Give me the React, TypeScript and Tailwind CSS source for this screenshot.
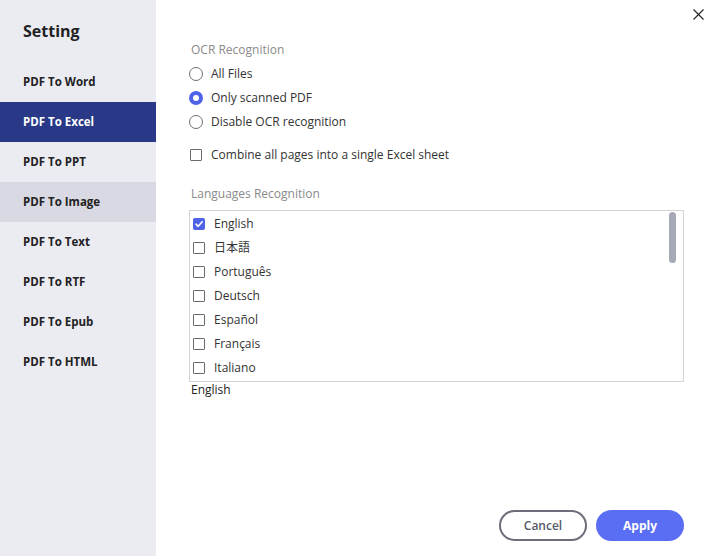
import React from "react";

const items = [
  "PDF To Word",
  "PDF To Excel",
  "PDF To PPT",
  "PDF To Image",
  "PDF To Text",
  "PDF To RTF",
  "PDF To Epub",
  "PDF To HTML",
];

const langs = ["English", "日本語", "Português", "Deutsch", "Español", "Français", "Italiano"];

function Radio({ checked, label }: { checked?: boolean; label: string }) {
  return (
    <div className="flex items-center h-6">
      <span
        className={
          checked
            ? "w-[14px] h-[14px] rounded-full bg-[#4f63e8] flex items-center justify-center"
            : "w-[14px] h-[14px] rounded-full border border-[#707070] bg-white"
        }
      >
        {checked && <span className="w-[6px] h-[6px] rounded-full bg-white" />}
      </span>
      <span className="ml-[8px] text-[12px] text-[#333]">{label}</span>
    </div>
  );
}

function Check({ checked, label }: { checked?: boolean; label: string }) {
  return (
    <div className="flex items-center h-6">
      {checked ? (
        <span className="w-[12px] h-[12px] rounded-[2px] bg-[#4f63e8] flex items-center justify-center">
          <svg width="10" height="10" viewBox="0 0 10 10">
            <path d="M2 5.2 L4.2 7.3 L8.2 2.8" stroke="white" strokeWidth="1.6" fill="none" strokeLinecap="round" strokeLinejoin="round" />
          </svg>
        </span>
      ) : (
        <span className="w-[12px] h-[12px] rounded-[1px] border border-[#6a6a6a] bg-white" />
      )}
      <span className="ml-[9px] text-[12px] text-[#333]">{label}</span>
    </div>
  );
}

export default function App() {
  return (
    <div
      className="w-[714px] h-[556px] flex bg-white overflow-hidden"
      style={{ fontFamily: '"Open Sans", "Noto Sans", "Noto Sans CJK JP", sans-serif' }}
    >
      <aside className="w-[156px] bg-[#ebecf2] flex flex-col">
        <div className="h-[62px] pl-[23px] pt-[19px] text-[16px] font-bold text-[#222]">Setting</div>
        {items.map((it) => (
          <div
            key={it}
            className={
              it === "PDF To Excel"
                ? "h-[40px] flex items-center pl-[23px] text-[11.5px] font-bold bg-[#293887] text-white"
                : it === "PDF To Image"
                ? "h-[40px] flex items-center pl-[23px] text-[11.5px] font-bold bg-[#d8d9e2] text-[#222]"
                : "h-[40px] flex items-center pl-[23px] text-[11.5px] font-bold text-[#222]"
            }
          >
            {it}
          </div>
        ))}
      </aside>
      <main className="flex-1 relative pl-[33px] pt-[40px]">
        <button className="absolute right-[8px] top-[6px] w-[16px] h-[16px] flex items-center justify-center">
          <svg width="11" height="11" viewBox="0 0 11 11">
            <path d="M0.5 0.5 L10.5 10.5 M10.5 0.5 L0.5 10.5" stroke="#222" strokeWidth="1.1" />
          </svg>
        </button>
        <div className="text-[12px] text-[#8a8a8a] h-[20px] leading-[20px] pl-[2px]">OCR Recognition</div>
        <div className="flex flex-col mt-[2px]">
          <Radio label="All Files" />
          <Radio checked label="Only scanned PDF" />
          <Radio label="Disable OCR recognition" />
        </div>
        <div className="mt-[9px] pl-[1px]">
          <Check label="Combine all pages into a single Excel sheet" />
        </div>
        <div className="mt-[17px] text-[12px] text-[#8a8a8a] h-[20px] leading-[20px] pl-[2px]">Languages Recognition</div>
        <div className="mt-[6px] w-[495px] h-[172px] border border-[#d4d4d4] relative pl-[3px] pt-[1px] overflow-hidden">
          {langs.map((l) => (
            <Check key={l} checked={l === "English"} label={l} />
          ))}
          <div className="absolute right-[7px] top-[1px] w-[7px] h-[51px] rounded-full bg-[#a6a9b6]" />
        </div>
        <div className="text-[12px] text-[#222] pl-[2px] h-[16px] leading-[16px]">English</div>
        <div className="absolute right-[30px] bottom-[15px] flex gap-[9px]">
          <button className="w-[88px] h-[31px] rounded-full border-2 border-[#6c6f7b] text-[12px] font-semibold text-[#555a66] bg-white">
            Cancel
          </button>
          <button className="w-[88px] h-[31px] rounded-full bg-[#5a6ef4] text-[12px] font-bold text-white">
            Apply
          </button>
        </div>
      </main>
    </div>
  );
}
